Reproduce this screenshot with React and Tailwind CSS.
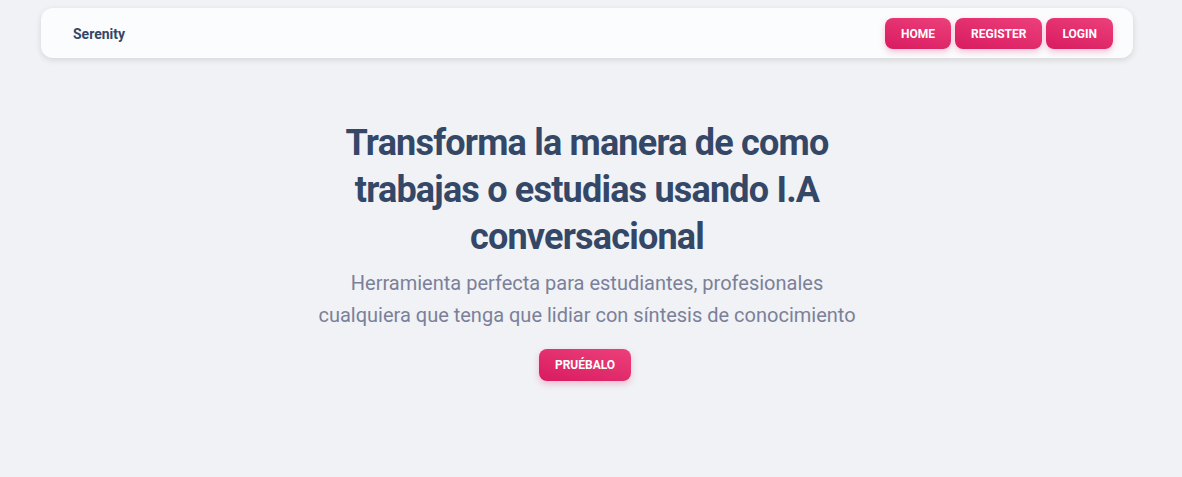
import React from 'react';

function NavButton({ children }) {
  return (
    <button
      type="button"
      className="h-[31px] px-4 rounded-lg bg-[linear-gradient(195deg,#ec407a,#d81b60)] text-white text-xs font-bold uppercase shadow-[0_3px_6px_rgba(233,30,99,0.25)]"
    >
      {children}
    </button>
  );
}

export default function App() {
  return (
    <div className="min-h-screen bg-[#f0f2f5] font-['Roboto',sans-serif] pt-2">
      <div className="w-[1092px] ml-[41px]">
        <nav className="h-[50px] flex items-center justify-between pl-8 pr-5 rounded-xl bg-[#fbfcfe] shadow-[0_2px_6px_rgba(0,0,0,0.12)]">
          <span className="text-sm font-bold text-[#344767] pt-px">Serenity</span>
          <div className="flex items-center gap-1 pt-px">
            <NavButton>Home</NavButton>
            <NavButton>Register</NavButton>
            <NavButton>Login</NavButton>
          </div>
        </nav>

        <section className="flex flex-col items-center text-center pt-[62px]">
          <h1 className="max-w-[520px] text-[36px] leading-[47px] tracking-[-0.05rem] font-bold text-[#344767]">
            Transforma la manera de como trabajas o estudias usando I.A conversacional
          </h1>
          <p className="mt-1.5 text-xl font-normal leading-8 text-[#7b809a]">
            Herramienta perfecta para estudiantes, profesionales
            <br />
            cualquiera que tenga que lidiar con síntesis de conocimiento
          </p>
          <button
            type="button"
            className="mt-[18px] mr-1 h-8 px-4 rounded-lg bg-[linear-gradient(195deg,#ec407a,#d81b60)] text-white text-xs font-bold uppercase shadow-[0_3px_6px_rgba(233,30,99,0.25)]"
          >
            Pruébalo
          </button>
        </section>
      </div>
    </div>
  );
}
